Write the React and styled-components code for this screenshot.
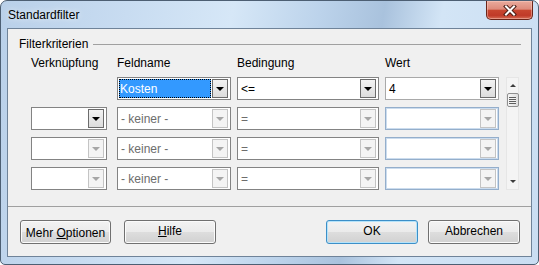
import React from "react";
import styled, { createGlobalStyle } from "styled-components";

const GlobalStyle = createGlobalStyle`
  html, body {
    margin: 0;
    padding: 0;
    background: #ffffff;
  }
  body {
    font-family: "Liberation Sans", Arial, sans-serif;
    font-size: 12px;
    color: #000;
  }
`;

const Window = styled.div`
  box-sizing: border-box;
  width: 539px;
  height: 265px;
  border: 1px solid #4d5f73;
  border-radius: 7px 7px 5px 5px;
  background: linear-gradient(
    100deg,
    #b9d0e9 0%,
    #c8dcf1 22%,
    #d6e7f7 40%,
    #bcd3eb 55%,
    #a9c2dd 66%,
    #d3e5f6 76%,
    #c9ddf2 100%
  );
  display: flex;
  flex-direction: column;
  padding: 0 6px 7px 6px;
  overflow: hidden;
`;

const TitleBar = styled.div`
  height: 27px;
  display: flex;
  align-items: flex-start;
  justify-content: space-between;
  padding-left: 1px;
`;

const Title = styled.span`
  margin-top: 7px;
  line-height: 14px;
  font-size: 12px;
  color: #000;
  text-shadow: 0 0 6px rgba(255, 255, 255, 0.9);
`;

const CloseButton = styled.div`
  box-sizing: border-box;
  width: 47px;
  height: 19px;
  margin-right: -1px;
  border: 1px solid #6b2519;
  border-top: none;
  border-radius: 0 0 5px 5px;
  background: linear-gradient(
    #eaab9d 0%,
    #de8b7b 45%,
    #c8462f 52%,
    #c03a28 80%,
    #d56c55 100%
  );
  box-shadow: inset 0 0 0 1px rgba(255, 210, 200, 0.45);
  display: flex;
  align-items: center;
  justify-content: center;
`;

const Client = styled.div`
  flex: 1;
  border: 1px solid #6f8399;
  background: #f0f0f0;
  display: flex;
  flex-direction: column;
`;

const GroupHeading = styled.div`
  margin-top: 8px;
  padding: 0 10px 0 11px;
  display: flex;
  align-items: center;
  line-height: 14px;
`;

const GroupRule = styled.div`
  flex: 1;
  height: 1px;
  margin-left: 5px;
  background: #a0a0a0;
`;

const FilterGrid = styled.div`
  margin-top: 5px;
  padding-left: 23px;
  display: grid;
  grid-template-columns: 80px 114px 142px 115px 13px;
  grid-template-rows: 14px repeat(4, 23px);
  column-gap: 6px;
  row-gap: 7px;
`;

const ColumnLabel = styled.div`
  line-height: 14px;
  white-space: nowrap;
`;

const Combo = styled.div`
  box-sizing: border-box;
  width: ${(p) => p.$w}px;
  height: 23px;
  border: 1px solid
    ${(p) =>
      p.$frame === "blue" ? "#94aecb" : p.$frame === "light" ? "#a9a9a9" : "#838383"};
  box-shadow: ${(p) => (p.$frame === "blue" ? "inset 0 0 0 1px #cbdcee" : "none")};
  background: #fff;
  padding: 1px 2px 1px 1px;
  display: flex;
`;

const Field = styled.div`
  flex: 1;
  display: flex;
  align-items: center;
  padding-left: ${(p) => (p.$selected ? 0 : 2)}px;
  color: ${(p) => (p.$muted ? "#6d6d6d" : "#000")};
  white-space: nowrap;
  overflow: hidden;
`;

const Selection = styled.div`
  box-sizing: border-box;
  flex: 1;
  align-self: stretch;
  margin-right: 1px;
  border: 1px dotted #000;
  background: #3399ff;
  color: #fff;
  display: flex;
  align-items: center;
`;

const DropButton = styled.div`
  box-sizing: border-box;
  width: 16px;
  border: 1px solid ${(p) => (p.$enabled ? "#6c6c6c" : "#c4c4c4")};
  background: ${(p) =>
    p.$enabled ? "linear-gradient(#f3f3f3, #dcdcdc)" : "#f4f4f4"};
  display: flex;
  align-items: center;
  justify-content: center;

  &::after {
    content: "";
    width: 0;
    height: 0;
    margin-top: 1px;
    border-left: 4px solid transparent;
    border-right: 4px solid transparent;
    border-top: 4px solid ${(p) => (p.$enabled ? "#000" : "#a6a6a6")};
  }
`;

const ScrollBar = styled.div`
  grid-column: 5;
  grid-row: 2 / span 4;
  box-sizing: border-box;
  border: 1px solid #e6e6e6;
  background: #f4f4f4;
  display: flex;
  flex-direction: column;
  align-items: center;
`;

const ScrollArrow = styled.div`
  height: 15px;
  display: flex;
  align-items: center;
  justify-content: center;

  &::after {
    content: "";
    width: 0;
    height: 0;
    border-left: 3px solid transparent;
    border-right: 3px solid transparent;
    ${(p) =>
      p.$down ? "border-top: 3px solid #3c3c3c;" : "border-bottom: 3px solid #3c3c3c;"}
  }
`;

const ScrollThumb = styled.div`
  box-sizing: border-box;
  width: 12px;
  height: 14px;
  border: 1px solid #8f8f8f;
  border-radius: 2px;
  background: linear-gradient(to right, #f6f6f6, #dedede);
  display: flex;
  align-items: center;
  justify-content: center;

  &::after {
    content: "";
    width: 7px;
    height: 7px;
    background: repeating-linear-gradient(
      to bottom,
      #5e5e5e 0 1px,
      #f2f2f2 1px 2px
    );
  }
`;

const ScrollTrack = styled.div`
  flex: 1;
`;

const Separator = styled.div`
  margin-top: 16px;
  height: 1px;
  background: #a0a0a0;
`;

const ButtonRow = styled.div`
  margin-top: 13px;
  padding: 0 11px 0 12px;
  display: flex;
  align-items: center;
`;

const PushButton = styled.div`
  box-sizing: border-box;
  width: ${(p) => p.$w || 92}px;
  height: 24px;
  margin-left: ${(p) => p.$gap || 0}px;
  border: 1px solid ${(p) => (p.$default ? "#3c8fc8" : "#707070")};
  border-radius: 3px;
  background: linear-gradient(#f3f3f3 0%, #ebebeb 48%, #dddddd 52%, #d1d1d1 100%);
  box-shadow: inset 0 0 0 1px ${(p) => (p.$default ? "#b5e3fa" : "#fbfbfb")};
  display: flex;
  align-items: ${(p) => (p.$low ? "flex-end" : "center")};
  justify-content: center;
  padding-bottom: ${(p) => (p.$low ? 3 : 2)}px;
  line-height: 14px;
  color: #000;
  white-space: nowrap;
`;

const Spacer = styled.div`
  flex: 1;
`;

const CloseGlyph = () => (
  <svg width="14" height="11" viewBox="0 0 14 11">
    <path d="M3 1.5 L11 9.5 M11 1.5 L3 9.5" stroke="#4a1d14" strokeWidth="4" strokeLinecap="square" />
    <path d="M3 1.5 L11 9.5 M11 1.5 L3 9.5" stroke="#ffffff" strokeWidth="2" strokeLinecap="square" />
  </svg>
);

const ComboBox = ({ w, text, muted, selected, enabled, frame }) => (
  <Combo $w={w} $frame={frame}>
    <Field $muted={muted} $selected={selected}>
      {selected ? <Selection>{text}</Selection> : text}
    </Field>
    <DropButton $enabled={enabled} />
  </Combo>
);

const rows = [
  { link: null, field: "Kosten", cond: "<=", value: "4", first: true },
  { link: true, field: "- keiner -", cond: "=", value: "" },
  { link: false, field: "- keiner -", cond: "=", value: "" },
  { link: false, field: "- keiner -", cond: "=", value: "" },
];

export default function App() {
  return (
    <>
      <GlobalStyle />
      <Window>
        <TitleBar>
          <Title>Standardfilter</Title>
          <CloseButton>
            <CloseGlyph />
          </CloseButton>
        </TitleBar>
        <Client>
          <GroupHeading>
            Filterkriterien
            <GroupRule />
          </GroupHeading>
          <FilterGrid>
            <ColumnLabel>Verknüpfung</ColumnLabel>
            <ColumnLabel>Feldname</ColumnLabel>
            <ColumnLabel>Bedingung</ColumnLabel>
            <ColumnLabel>Wert</ColumnLabel>
            <div />
            {rows.map((r, i) => (
              <React.Fragment key={i}>
                {r.link === null ? (
                  <div />
                ) : (
                  <ComboBox w={76} text="" enabled={r.link} />
                )}
                <ComboBox
                  w={114}
                  text={r.field}
                  selected={r.first}
                  muted={!r.first}
                  enabled={r.first}
                />
                <ComboBox w={142} text={r.cond} muted={!r.first} enabled={r.first} />
                <ComboBox
                  w={114}
                  text={r.value}
                  enabled={r.first}
                  frame={r.first ? "light" : "blue"}
                />
              </React.Fragment>
            ))}
            <ScrollBar>
              <ScrollArrow />
              <ScrollThumb />
              <ScrollTrack />
              <ScrollArrow $down />
            </ScrollBar>
          </FilterGrid>
          <Separator />
          <ButtonRow>
            <PushButton $w={91} $low>
              Mehr&nbsp;<u>O</u>ptionen
            </PushButton>
            <PushButton $w={92} $gap={13}>
              <u>H</u>ilfe
            </PushButton>
            <Spacer />
            <PushButton $default>OK</PushButton>
            <PushButton $gap={10}>Abbrechen</PushButton>
          </ButtonRow>
        </Client>
      </Window>
    </>
  );
}
